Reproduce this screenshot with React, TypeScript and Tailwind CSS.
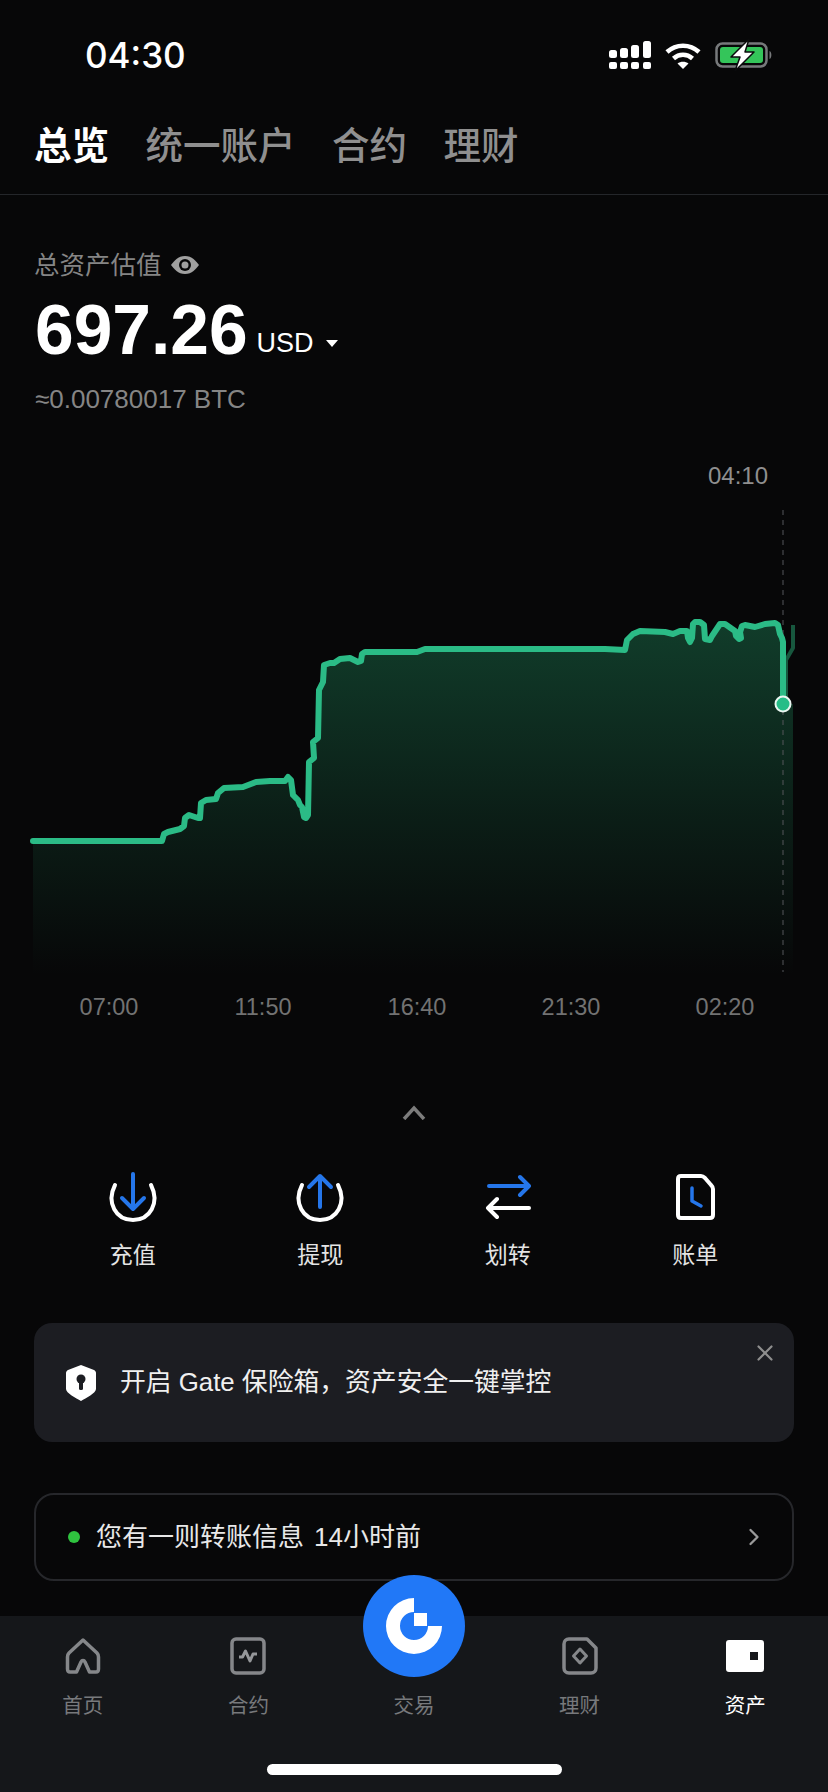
import React from 'react';
import { ChevronRight, X } from 'lucide-react';

const LINE =
  'M33 841 L162 841 L164 834 L168 832 L180 829 L184 826 L185 818 L189 815 L198 818 L200 818 L201 803 L206 800 L216 799 L218 793 L224 788 L243 787 L256 782 L270 781 L285 781 L288 777 L291 780 L293 795 L298 800 L300 805 L302 807 L304 817 L306 818 L308 815 L309 762 L314 758 L313 742 L318 738 L319 690 L323 682 L324 665 L330 663 L334 663 L340 659 L350 658 L358 662 L361 661 L362 654 L365 652 L400 652 L417 652 L425 649 L605 649 L625 650 L627 640 L633 634 L640 631 L665 632 L673 634 L680 631 L687 631 L688 638 L690 642 L692 638 L693 624 L695 622 L700 622 L704 625 L705 639 L710 640 L712 636 L716 630 L720 624 L725 624 L735 631 L736 636 L739 639 L741 638 L740 632 L742 626 L745 625 L755 627 L765 624 L775 623 L778 625 L780 634 L782 638 L783 642 L783 704';

const AREA = `${LINE} L793 704 L793 975 L33 975 Z`;

const TIMES = ['07:00', '11:50', '16:40', '21:30', '02:20'];

const Chart = () => (
  <svg viewBox="0 491 828 494" className="block h-[494px] w-[828px]" fill="none">
    <defs>
      <linearGradient id="area" gradientUnits="userSpaceOnUse" x1="0" y1="630" x2="0" y2="975">
        <stop offset="0" stopColor="#1f8a5c" stopOpacity="0.4" />
        <stop offset="0.55" stopColor="#1f8a5c" stopOpacity="0.17" />
        <stop offset="1" stopColor="#1f8a5c" stopOpacity="0" />
      </linearGradient>
    </defs>
    <path d={AREA} fill="url(#area)" />
    <path d="M783 510 V972" stroke="#55575a" strokeWidth="1" strokeDasharray="5 5" />
    <path d="M786 700 V660 L793 648 V625" stroke="#17573e" strokeWidth="4" strokeLinejoin="round" />
    <path d={LINE} stroke="#2bbb86" strokeWidth="6" strokeLinejoin="round" strokeLinecap="round" />
    <circle cx="783" cy="704" r="7.500" fill="#25bd87" stroke="#e9f7f1" strokeWidth="2" />
  </svg>
);

const SignalIcon = () => (
  <svg width="42" height="28" viewBox="0 0 42 28" fill="#fff">
    <rect x="0" y="9" width="8" height="8" rx="2.500" />
    <rect x="11" y="7" width="8" height="10" rx="2.500" />
    <rect x="22" y="4" width="8" height="13" rx="2.500" />
    <rect x="34" y="0" width="8" height="17" rx="2.500" />
    <rect x="0" y="21" width="8" height="7" rx="2" />
    <rect x="11" y="21" width="8" height="7" rx="2" />
    <rect x="22" y="21" width="8" height="7" rx="2" />
    <rect x="34" y="21" width="8" height="7" rx="2" />
  </svg>
);

const WifiIcon = () => (
  <svg width="36" height="27" viewBox="0 0 36 27" fill="none" stroke="#fff" strokeWidth="4.500">
    <path d="M2 10 C11 1.500 25 1.500 34 10" />
    <path d="M8.500 16.500 C14 11.500 22 11.500 27.500 16.500" />
    <path d="M18 27 L12.500 21.500 C15.500 19 20.500 19 23.500 21.500 Z" fill="#fff" stroke="none" />
  </svg>
);

const BatteryIcon = () => (
  <svg width="58" height="32" viewBox="0 0 58 32" fill="none">
    <rect x="1.500" y="4.500" width="50" height="23" rx="6" stroke="#77797b" strokeWidth="2.500" />
    <rect x="5" y="8" width="43" height="16" rx="3" fill="#34c55a" />
    <path d="M54.500 12 C57 13 57 19 54.500 20 Z" fill="#77797b" />
    <path
      d="M34 0 L16 18 H25 L20 32 L39 13 H30 Z"
      fill="#fff"
      stroke="#0a0a0c"
      strokeWidth="1.500"
      strokeLinejoin="round"
    />
  </svg>
);

const DepositIcon = () => (
  <svg width="60" height="60" viewBox="0 0 60 60" fill="none" strokeWidth="4" strokeLinecap="round" strokeLinejoin="round">
    <path d="M12 17 C3 35 13 52 30 52 C47 52 57 35 48 17" stroke="#fff" />
    <path d="M30 6 V40 M19 30 L30 41 L41 30" stroke="#2576ea" />
  </svg>
);

const WithdrawIcon = () => (
  <svg width="60" height="60" viewBox="0 0 60 60" fill="none" strokeWidth="4" strokeLinecap="round" strokeLinejoin="round">
    <path d="M12 17 C3 35 13 52 30 52 C47 52 57 35 48 17" stroke="#fff" />
    <path d="M30 39 V8 M19 19 L30 8 L41 19" stroke="#2576ea" />
  </svg>
);

const TransferIcon = () => (
  <svg width="60" height="60" viewBox="0 0 60 60" fill="none" strokeWidth="4" strokeLinecap="round" strokeLinejoin="round">
    <path d="M11 18 H51 M42 9 L51 18 L42 27" stroke="#2576ea" />
    <path d="M51 40 H10 M19 31 L10 40 L19 49" stroke="#fff" />
  </svg>
);

const BillIcon = () => (
  <svg width="60" height="60" viewBox="0 0 60 60" fill="none" strokeWidth="4" strokeLinecap="round" strokeLinejoin="round">
    <path d="M16 8 H36 C38 8 39 9 40 10 L46 17 C47 18 48 19 48 21 V47 C48 49 47 50 45 50 H16 C14 50 13 49 13 47 V11 C13 9 14 8 16 8 Z" stroke="#fff" />
    <path d="M27 20 V33 L36 38" stroke="#2576ea" strokeWidth="3.500" />
  </svg>
);

const ACTIONS = [
  { label: '充值', icon: <DepositIcon /> },
  { label: '提现', icon: <WithdrawIcon /> },
  { label: '划转', icon: <TransferIcon /> },
  { label: '账单', icon: <BillIcon /> },
];

const HomeIcon = () => (
  <svg width="36" height="38" viewBox="0 0 36 38" fill="none" stroke="#85878a" strokeWidth="3.500" strokeLinejoin="round">
    <path d="M18 3 L32 16 C33 17 33.500 18 33.500 20 V32 C33.500 34 32.500 35 31 35 H24.500 L20 25 C19 23 17 23 16 25 L11.500 35 H5 C3.500 35 2.500 34 2.500 32 V20 C2.500 18 3 17 4 16 Z" />
  </svg>
);

const FuturesIcon = () => (
  <svg width="36" height="38" viewBox="0 0 36 38" fill="none" stroke="#85878a" strokeLinejoin="round">
    <rect x="2" y="2" width="32" height="34" rx="4" strokeWidth="3.500" />
    <path d="M9 20 H12.500 L15.500 14 L20 24 L23 17 H27" strokeWidth="3" stroke="#95979a" />
  </svg>
);

const EarnIcon = () => (
  <svg width="36" height="38" viewBox="0 0 36 38" fill="none" stroke="#85878a" strokeLinejoin="round">
    <path d="M7 2 H25 L34 11 V31 C34 34 32 36 29 36 H7 C4 36 2 34 2 31 V7 C2 4 4 2 7 2 Z" strokeWidth="3.500" />
    <path d="M18 12 L24.500 19 L18 26 L11.500 19 Z" strokeWidth="3" />
  </svg>
);

const WalletIcon = () => (
  <svg width="38" height="32" viewBox="0 0 38 32">
    <rect x="0" y="0" width="38" height="32" rx="3" fill="#fff" />
    <rect x="24" y="12" width="8" height="8" fill="#15171a" />
  </svg>
);

const NAV = [
  { label: '首页', icon: <HomeIcon /> },
  { label: '合约', icon: <FuturesIcon /> },
  { label: '交易', icon: null },
  { label: '理财', icon: <EarnIcon /> },
  { label: '资产', icon: <WalletIcon />, active: true },
];

export default function App() {
  return (
    <div className="flex h-[1792px] w-[828px] flex-col overflow-hidden bg-[#070708] font-['Liberation_Sans','Noto_Sans_CJK_SC',sans-serif] text-white">
      {/* status bar */}
      <div className="flex h-[110px] shrink-0 items-center justify-between pl-[85px] pr-[55px]">
        <span className="font-['Inter',sans-serif] text-[35px] font-medium">04:30</span>
        <div className="flex items-center gap-[14px]">
          <SignalIcon />
          <WifiIcon />
          <BatteryIcon />
        </div>
      </div>

      {/* tabs */}
      <div className="flex h-[85px] shrink-0 items-center gap-[36.500px] border-b border-[#24262a] pb-[10px] pl-[34px] text-[37.500px] font-medium leading-none text-[#8f8f8f]">
        <span className="font-bold text-white">总览</span>
        <span>统一账户</span>
        <span>合约</span>
        <span>理财</span>
      </div>

      {/* balance */}
      <div className="mt-[55px] flex h-[30px] items-center gap-[9px] pl-[34px] text-[25.500px] leading-[30px] text-[#858585]">
        <span>总资产估值</span>
        <svg width="28" height="20" viewBox="0 0 28 20">
          <path d="M14 1 C21 1 25 6 28 10 C25 14 21 19 14 19 C7 19 3 14 0 10 C3 6 7 1 14 1 Z" fill="#a0a0a0" />
          <circle cx="14" cy="10" r="6" fill="#070708" />
          <circle cx="14" cy="10" r="3.500" fill="#a0a0a0" />
        </svg>
      </div>
      <div className="mt-[18px] flex h-[64px] items-end pl-[35px]">
        <span className="text-[69.500px] font-bold leading-[64px]">697.26</span>
        <span className="mb-[1px] ml-[9px] text-[27px] leading-[36px]">USD</span>
        <span className="mb-[15px] ml-[12px] h-0 w-0 border-x-[6px] border-t-[7px] border-x-transparent border-t-white" />
      </div>
      <div className="mt-[22px] h-[30px] pl-[35px] text-[26px] leading-[30px] text-[#858585]">≈0.00780017 BTC</div>

      {/* chart */}
      <div className="mt-[47px] h-[30px] pr-[60px] text-right text-[24px] leading-[30px] text-[#8f8f8f]">04:10</div>
      <Chart />
      <div className="mt-[7px] flex h-[30px] pl-[32px]">
        {TIMES.map((t) => (
          <span key={t} className="w-[154px] text-center text-[23.500px] leading-[30px] text-[#727272]">
            {t}
          </span>
        ))}
      </div>

      <div className="mt-[83px] flex h-[15px] justify-center">
        <svg width="24" height="15" viewBox="0 0 24 15" fill="none" stroke="#7c7c7c" strokeWidth="3.500">
          <path d="M2 14 L12 3 L22 14" />
        </svg>
      </div>

      {/* actions */}
      <div className="mt-[48px] grid grid-cols-4 pl-[39px] pr-[39px]">
        {ACTIONS.map((a) => (
          <div key={a.label} className="flex flex-col items-center">
            <div className="h-[60px]">{a.icon}</div>
            <span className="mt-[12px] text-[23px] leading-[30px] text-[#e4e4e4]">{a.label}</span>
          </div>
        ))}
      </div>

      {/* safe box banner */}
      <div className="relative mx-[34px] mt-[53px] flex h-[119px] shrink-0 items-center gap-[9px] rounded-[18px] bg-[#1c1d22] pl-[32px]">
        <svg width="30" height="36" viewBox="0 0 30 36">
          <path d="M15 0 L28 5 C29 5.500 30 6.500 30 8 V24 C30 28 20 33 15 36 C10 33 0 28 0 24 V8 C0 6.500 1 5.500 2 5 Z" fill="#fff" />
          <circle cx="15" cy="14" r="4.500" fill="#1c1d22" />
          <rect x="13" y="15" width="4" height="10" rx="1.500" fill="#1c1d22" />
        </svg>
        <span className="ml-[15px] text-[25.800px] text-[#f0f0f0]">开启 Gate 保险箱，资产安全一键掌控</span>
        <X className="absolute right-[16px] top-[17px] h-[26px] w-[26px] text-[#8e8e8e]" strokeWidth={2} />
      </div>

      {/* notice */}
      <div className="mx-[34px] mt-[51px] flex h-[88px] shrink-0 items-center rounded-[20px] border-2 border-[#26272b] pl-[32px] pr-[24px]">
        <span className="h-[12px] w-[12px] rounded-full bg-[#2fc33f]" />
        <span className="ml-[16px] flex-1 text-[26px] text-[#e8e8e8]">
          您有一则转账信息<span className="ml-[10px]">14小时前</span>
        </span>
        <ChevronRight className="h-[28px] w-[28px] text-[#9a9a9a]" strokeWidth={2} />
      </div>

      {/* bottom nav */}
      <div className="relative mt-auto h-[176px] shrink-0 bg-[#15171a] pt-[20px]">
        <div className="absolute left-[363px] top-[-41px] flex h-[102px] w-[102px] items-center justify-center rounded-full bg-[#2178f7]">
          <svg width="56" height="56" viewBox="0 0 56 56" fill="#fff">
            <path d="M28 0 A28 28 0 1 0 56 28 H42 A14 14 0 1 1 28 14 Z" />
            <rect x="28" y="15" width="13" height="13" />
          </svg>
        </div>
        <div className="grid grid-cols-5">
          {NAV.map((n) => (
            <div key={n.label} className="flex flex-col items-center">
              <div className="flex h-[40px] items-center justify-center">{n.icon}</div>
              <span className={`mt-[17px] text-[20.500px] leading-[26px] ${n.active ? 'text-white' : 'text-[#77797c]'}`}>
                {n.label}
              </span>
            </div>
          ))}
        </div>
        <div className="mx-auto mt-[45px] h-[11px] w-[295px] rounded-full bg-white" />
      </div>
    </div>
  );
}
